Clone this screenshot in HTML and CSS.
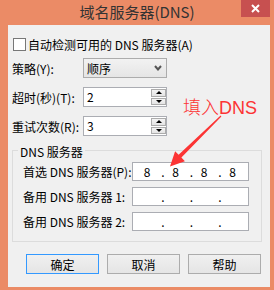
FILE: index.html
```html
<!DOCTYPE html>
<html lang="zh-CN">

<head>
    <meta charset="UTF-8">
    <meta name="viewport" content="width=device-width, initial-scale=1.0">
    <title>域名服务器(DNS)</title>
    <link rel="stylesheet" href="styles.css">
</head>

<body>

    <div class="window">
        <!-- Title bar -->
        <div class="titlebar">
            <span></span>
            <span class="title">域名服务器(DNS)</span>
            <span class="close">
                <svg width="9" height="9" viewBox="0 0 9 9">
                    <path d="M1 1 L8 8 M8 1 L1 8" stroke="#fff" stroke-width="2" fill="none" />
                </svg>
            </span>
        </div>

        <div class="client">
            <div class="check-row">
                <span class="checkbox"></span>
                <span>自动检测可用的 DNS 服务器(A)</span>
            </div>

            <div class="field-row">
                <span class="label">策略(Y):</span>
                <div class="select">
                    <span>顺序</span>
                    <svg width="8" height="6" viewBox="0 0 8 6">
                        <path d="M1 1 L4 4.5 L7 1" stroke="#555" stroke-width="2" fill="none" />
                    </svg>
                </div>
            </div>

            <div class="field-row">
                <span class="label">超时(秒)(T):</span>
                <div class="spin">
                    <span class="spin-value">2</span>
                    <div class="spin-btns">
                        <span class="spin-btn"><span class="tri-up"></span></span>
                        <span class="spin-btn"><span class="tri-down"></span></span>
                    </div>
                </div>
            </div>

            <div class="field-row">
                <span class="label">重试次数(R):</span>
                <div class="spin">
                    <span class="spin-value">3</span>
                    <div class="spin-btns">
                        <span class="spin-btn"><span class="tri-up"></span></span>
                        <span class="spin-btn"><span class="tri-down"></span></span>
                    </div>
                </div>
            </div>

            <!-- DNS servers group -->
            <fieldset class="group">
                <legend>DNS 服务器</legend>
                <div class="ip-row">
                    <span class="ip-label">首选 DNS 服务器(P):</span>
                    <div class="ip-box">
                        <span class="octet">8</span><span class="dot">.</span>
                        <span class="octet">8</span><span class="dot">.</span>
                        <span class="octet">8</span><span class="dot">.</span>
                        <span class="octet">8</span>
                    </div>
                </div>
                <div class="ip-row">
                    <span class="ip-label">备用 DNS 服务器 1:</span>
                    <div class="ip-box">
                        <span class="octet"></span><span class="dot">.</span>
                        <span class="octet"></span><span class="dot">.</span>
                        <span class="octet"></span><span class="dot">.</span>
                        <span class="octet"></span>
                    </div>
                </div>
                <div class="ip-row">
                    <span class="ip-label">备用 DNS 服务器 2:</span>
                    <div class="ip-box">
                        <span class="octet"></span><span class="dot">.</span>
                        <span class="octet"></span><span class="dot">.</span>
                        <span class="octet"></span><span class="dot">.</span>
                        <span class="octet"></span>
                    </div>
                </div>
            </fieldset>

            <div class="buttons">
                <button class="btn default">确定</button>
                <button class="btn">取消</button>
                <button class="btn">帮助</button>
            </div>
        </div>

        <!-- Annotation -->
        <div class="note">填入DNS</div>
        <svg class="arrow" width="274" height="290" viewBox="0 0 274 290">
            <polygon points="221.4,116.4 181.4,157.6 184.9,161.2 170,166.5 175.1,151.2 178.6,154.8 220.6,115.6" fill="#fc3434" />
        </svg>
    </div>

</body>

</html>
```

FILE: styles.css
```css
body {
    margin: 0;
    padding: 0;
    font-family: "Noto Sans CJK SC", "Noto Sans", sans-serif;
    font-size: 12px;
}

.window {
    position: relative;
    width: 274px;
    height: 290px;
    background-color: #eb8b66;
    overflow: hidden;
}

.titlebar {
    height: 25px;
    display: grid;
    grid-template-columns: 1fr auto 1fr;
}

.title {
    font-size: 15px;
    line-height: 23px;
    color: #333;
}

.close {
    justify-self: end;
    width: 29px;
    height: 17px;
    margin-right: 4px;
    background-color: #c75050;
    display: flex;
    align-items: center;
    justify-content: center;
}

.client {
    margin: 0 4px 0 8px;
    height: 262px;
    box-sizing: border-box;
    padding: 13px 0 0 4px;
    background-color: #f0f0f0;
    color: #000;
}

.check-row {
    display: flex;
    align-items: center;
    height: 13px;
    line-height: 13px;
}

.checkbox {
    width: 11px;
    height: 11px;
    margin-left: 1px;
    margin-right: 2px;
    border: 1px solid #777;
    background-color: #fff;
}

.field-row {
    display: flex;
    align-items: center;
    height: 20px;
    margin-top: 7px;
}

.field-row + .field-row {
    margin-top: 9px;
}

.label {
    width: 71px;
}

.select {
    width: 84px;
    height: 20px;
    box-sizing: border-box;
    border: 1px solid #acacac;
    background: linear-gradient(#f2f2f2, #e5e5e5);
    display: flex;
    align-items: center;
    justify-content: space-between;
    padding: 0 4px 0 3px;
}

.spin {
    width: 84px;
    height: 20px;
    box-sizing: border-box;
    border: 1px solid #abadb3;
    background-color: #fff;
    display: flex;
}

.spin-value {
    flex: 1;
    padding-left: 3px;
    line-height: 18px;
}

.spin-btns {
    width: 15px;
    display: flex;
    flex-direction: column;
    gap: 1px;
    padding: 1px 0;
}

.spin-btn {
    flex: 1;
    border: 1px solid #acacac;
    background: linear-gradient(#f4f4f4, #e4e4e4);
    display: flex;
    align-items: center;
    justify-content: center;
}

.tri-up,
.tri-down {
    width: 0;
    height: 0;
    border-left: 3px solid transparent;
    border-right: 3px solid transparent;
}

.tri-up {
    border-bottom: 3px solid #000;
}

.tri-down {
    border-top: 3px solid #000;
}

.group {
    margin: 5px 0 0 0;
    padding: 3px 0 10px 10px;
    width: 250px;
    box-sizing: border-box;
    border: 1px solid #dcdcdc;
    min-width: 0;
}

.group legend {
    margin-left: -5px;
    padding: 4px 2px 0;
    line-height: 14px;
}

.ip-row {
    display: flex;
    align-items: center;
    height: 19px;
}

.ip-row + .ip-row {
    margin-top: 6px;
}

.ip-label {
    width: 109px;
}

.ip-box {
    width: 117px;
    height: 19px;
    box-sizing: border-box;
    border: 1px solid #abadb3;
    background-color: #fff;
    display: flex;
    padding-left: 3px;
    line-height: 17px;
}

.octet {
    width: 22px;
    text-align: center;
}

.dot {
    width: 6.5px;
    text-align: right;
}

.buttons {
    display: flex;
    gap: 8px;
    margin-top: 12px;
    padding-left: 14px;
}

.btn {
    width: 73px;
    height: 20px;
    padding: 0;
    font-family: inherit;
    font-size: 12px;
    color: #000;
    border: 1px solid #acacac;
    background: linear-gradient(#f0f0f0, #e5e5e5);
}

.btn.default {
    border-color: #3399ff;
}

.note {
    position: absolute;
    left: 183px;
    top: 96px;
    font-family: "Liberation Sans", "Noto Sans CJK SC", sans-serif;
    font-size: 18px;
    font-weight: 300;
    line-height: 24px;
    color: #fc3434;
}

.arrow {
    position: absolute;
    left: 0;
    top: 0;
}
```
